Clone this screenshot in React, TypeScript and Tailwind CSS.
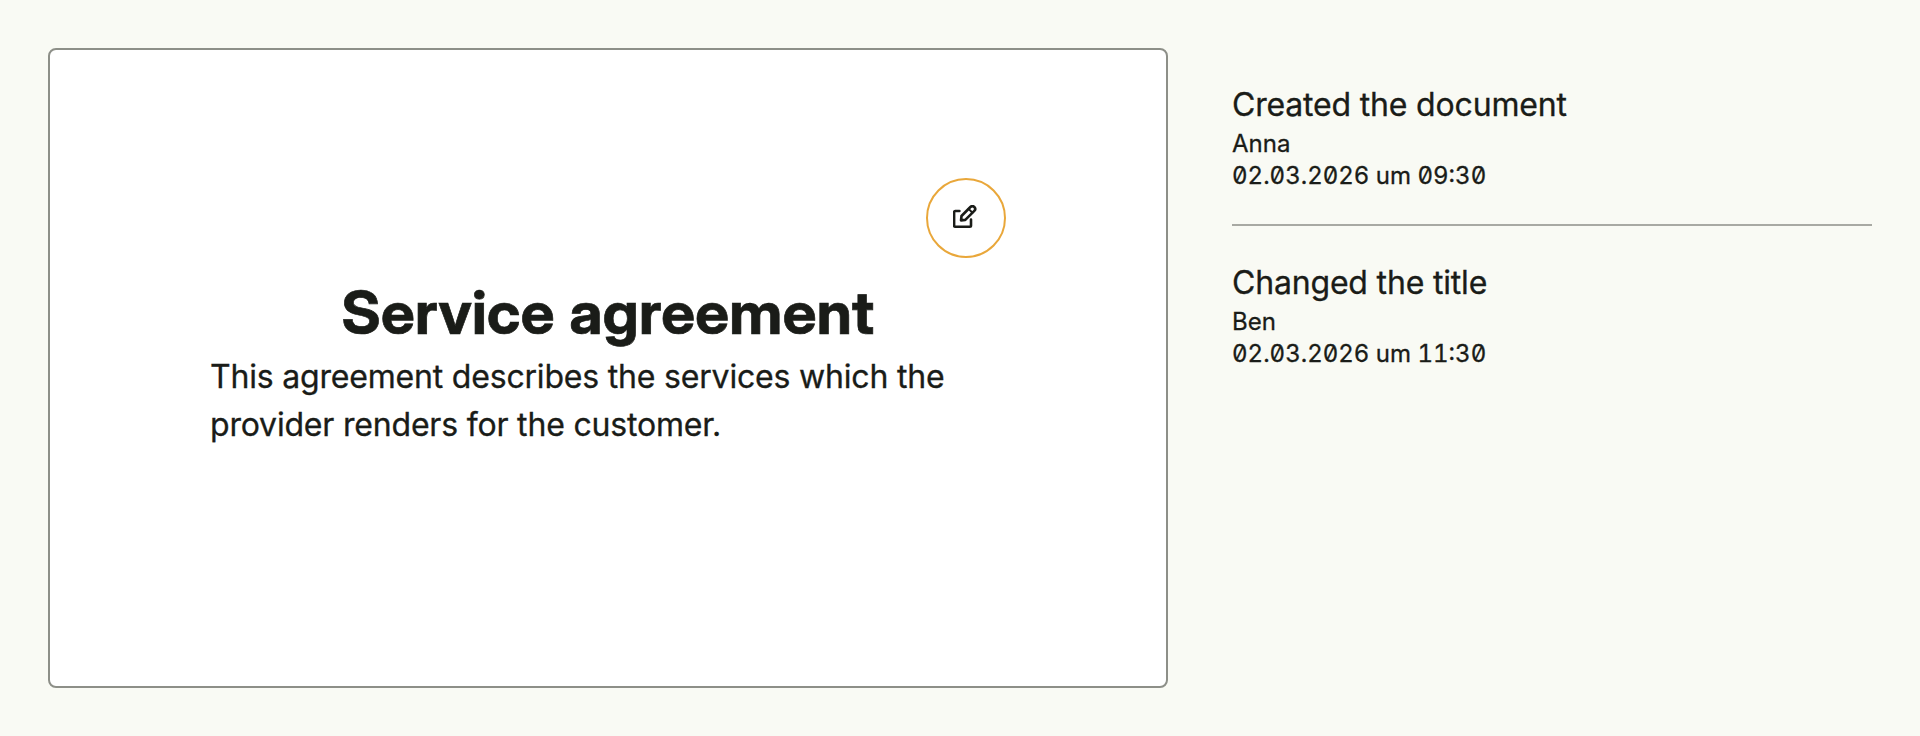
type Entry = { action: string; author: string; time: string };

const entries: Entry[] = [
  { action: "Created the document", author: "Anna", time: "02.03.2026 um 09:30" },
  { action: "Changed the title", author: "Ben", time: "02.03.2026 um 11:30" },
];

function EditIcon() {
  return (
    <svg viewBox="0.6 0.2 26 26" className="size-[26px]" fill="none" stroke="currentColor" strokeWidth="2.6" strokeLinecap="round" strokeLinejoin="round">
      <path d="M7 6.2H2.9a1.2 1.2 0 0 0-1.2 1.2V20.8a1.2 1.2 0 0 0 1.2 1.2H17.4a1.2 1.2 0 0 0 1.2-1.2V14.8" />
      <path d="M8.6 15.6l.5-4.4 8.9-9a2.75 2.75 0 0 1 3.9 3.9l-9 9z" />
      <path d="M16.2 4.1l3.8 3.8" strokeWidth="2" />
    </svg>
  );
}

export default function App() {
  return (
    <div className="flex h-[736px] w-full gap-16 bg-[#f9faf4] p-12 font-['Inter',sans-serif] text-[#1a1c18] [-webkit-text-stroke:0.3px_#1a1c18]">
      <main className="h-[640px] w-[1120px] shrink-0 rounded-lg border-2 border-[#8d8f88] bg-white px-40 pt-32">
        <div className="flex justify-end">
          <button aria-label="Edit" className="flex size-20 items-center justify-center rounded-full border-2 border-[#e9a73a]">
            <EditIcon />
          </button>
        </div>
        <h1 className="mt-3.5 text-center font-['Inter_Display','Inter',sans-serif] text-[60px] leading-20 font-bold tracking-[0.3px] [word-spacing:1.5px] [-webkit-text-stroke:0.7px_#1a1c18]">
          Service agreement
        </h1>
        <p className="pt-px text-[32px] leading-12 tracking-[-0.19px]">
          This agreement describes the services which the provider renders for the customer.
        </p>
      </main>
      <aside className="flex-1">
        <ul className="divide-y-2 divide-[#a8a9a3]">
          {entries.map((entry) => (
            <li key={entry.action} className="py-8">
              <h2 className="h-12 pt-px text-[32px] leading-12 tracking-[-0.18px]">{entry.action}</h2>
              <p className="text-2xl leading-8">{entry.author}</p>
              <p className="text-2xl leading-8 slashed-zero tabular-nums">{entry.time}</p>
            </li>
          ))}
        </ul>
      </aside>
    </div>
  );
}
